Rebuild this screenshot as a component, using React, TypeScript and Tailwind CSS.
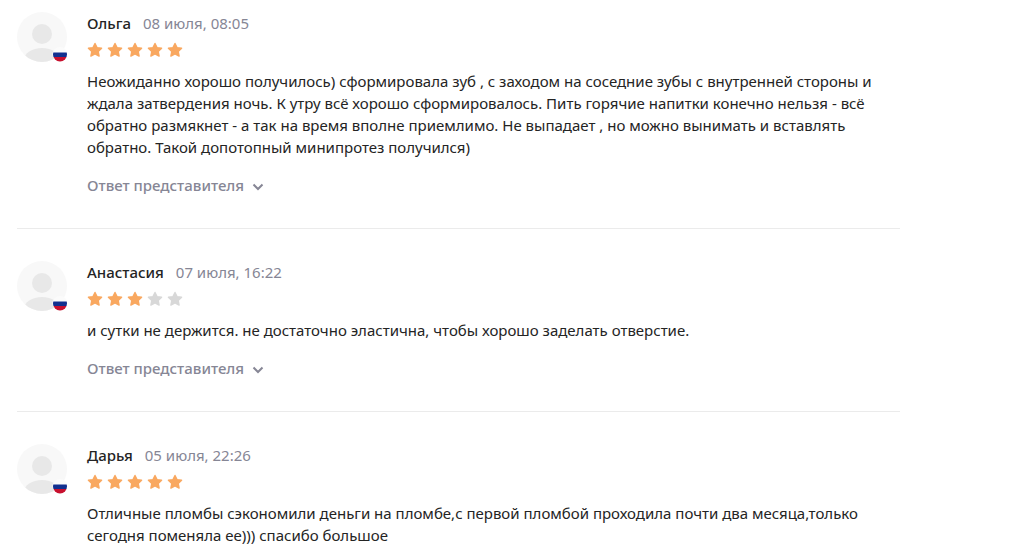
import { useId } from "react";

type Review = { name: string; date: string; rating: number; text: string; reply: boolean };

const reviews: Review[] = [
  { name: "Ольга", date: "08 июля, 08:05", rating: 5, reply: true, text: "Неожиданно хорошо получилось) сформировала зуб , с заходом на соседние зубы с внутренней стороны и ждала затвердения ночь. К утру всё хорошо сформировалось. Пить горячие напитки конечно нельзя - всё обратно размякнет - а так на время вполне приемлимо. Не выпадает , но можно вынимать и вставлять обратно. Такой допотопный минипротез получился)" },
  { name: "Анастасия", date: "07 июля, 16:22", rating: 3, reply: true, text: "и сутки не держится. не достаточно эластична, чтобы хорошо заделать отверстие." },
  { name: "Дарья", date: "05 июля, 22:26", rating: 5, reply: false, text: "Отличные пломбы сэкономили деньги на пломбе,с первой пломбой проходила почти два месяца,только сегодня поменяла ее))) спасибо большое" },
];

function Avatar() {
  const id = useId();
  return (
    <svg viewBox="0 0 50 50" className="size-[50px] shrink-0" aria-hidden="true">
      <defs>
        <clipPath id={`${id}-face`}><circle cx="25" cy="25" r="25" /></clipPath>
        <clipPath id={`${id}-flag`}><circle cx="43" cy="42.5" r="7" /></clipPath>
      </defs>
      <circle cx="25" cy="25" r="25" fill="#f8f8f8" />
      <g clipPath={`url(#${id}-face)`} fill="#e8e8e8">
        <circle cx="25" cy="22" r="10" />
        <ellipse cx="25" cy="48" rx="18" ry="12" />
      </g>
      <circle cx="43" cy="42.5" r="7.5" fill="#fbfbfb" />
      <g clipPath={`url(#${id}-flag)`}>
        <path fill="#12308f" d="M36 40.5h14V45H36z" />
        <path fill="#c8102e" d="M36 45h14v5H36z" />
      </g>
    </svg>
  );
}

function Stars({ rating }: { rating: number }) {
  return (
    <div className="flex gap-1" role="img" aria-label={`Оценка ${rating} из 5`}>
      {[1, 2, 3, 4, 5].map((n) => {
        const color = n <= rating ? "#f9a860" : "#d8d8d8";
        return (
          <svg key={n} viewBox="0 0 16 16" className="size-4" fill={color} stroke={color} strokeWidth="1.4" strokeLinejoin="round">
            <path d="M8 1.5l2 4.1 4.6.6-3.4 3.2.9 4.7L8 11.9l-4.1 2.2.9-4.7-3.4-3.2L6 5.6z" />
          </svg>
        );
      })}
    </div>
  );
}

export default function App() {
  return (
    <main className="h-screen overflow-hidden bg-white pl-[17px] pr-[109px] font-['Noto_Sans',sans-serif] text-[15px] leading-[22px] text-[#242424]">
      {reviews.map((r) => (
        <article key={r.name} className="flex items-start gap-5 border-b border-[#ebebeb] pb-8 pt-3 not-first:pt-8">
          <Avatar />
          <div className="min-w-0 flex-1">
            <header className="flex gap-3">
              <h2 className="font-medium">{r.name}</h2>
              <time className="text-[#868695]">{r.date}</time>
            </header>
            <div className="mt-2"><Stars rating={r.rating} /></div>
            <p className="mt-3">{r.text}</p>
            {r.reply && (
              <button type="button" className="mt-4 flex items-center gap-2 font-medium text-[#868695]">
                Ответ представителя
                <svg viewBox="0 0 12 8" className="mt-1 h-2 w-3" fill="none" stroke="currentColor" strokeWidth="2"><path d="M1.5 1.5L6 6l4.500-4.500" /></svg>
              </button>
            )}
          </div>
        </article>
      ))}
    </main>
  );
}
